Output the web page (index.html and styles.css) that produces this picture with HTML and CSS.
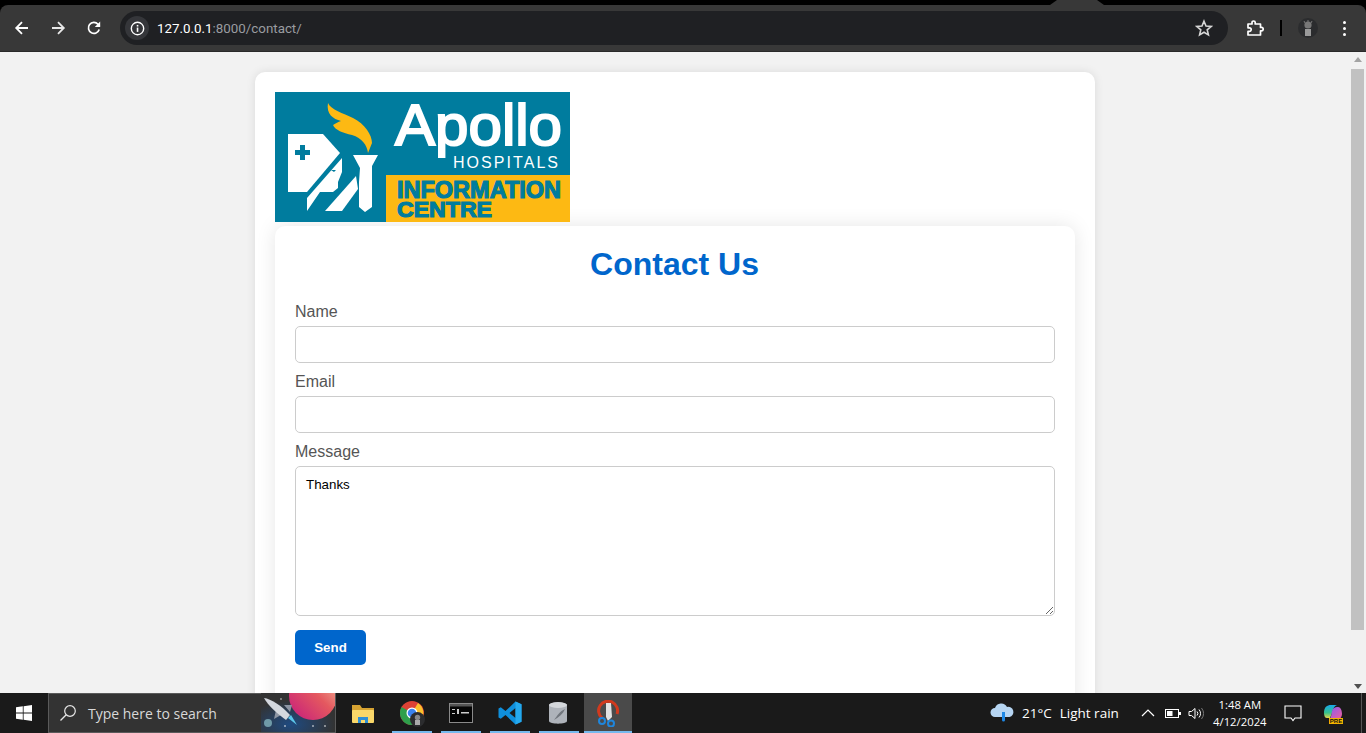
FILE: index.html
```html
<!DOCTYPE html>
<html lang="en">
<head>
    <meta charset="UTF-8">
    <meta name="viewport" content="width=device-width, initial-scale=1.0">
    <title>Contact Us</title>
    <link rel="stylesheet" href="styles.css">
</head>
<body>
    <!-- Browser toolbar -->
    <header class="browser-bar">
        <div class="tab-strip"><span class="tab-gap"></span></div>
        <div class="toolbar">
            <button class="tool-btn" type="button" aria-label="Back">
                <svg width="16" height="16" viewBox="0 0 16 16"><path d="M14 8H2.5M8 2.2 2.2 8 8 13.8" fill="none" stroke="#fff" stroke-width="1.8"/></svg>
            </button>
            <button class="tool-btn" type="button" aria-label="Forward">
                <svg width="16" height="16" viewBox="0 0 16 16"><path d="M2 8h11.5M8 2.2 13.8 8 8 13.8" fill="none" stroke="#e8e8e8" stroke-width="1.8"/></svg>
            </button>
            <button class="tool-btn" type="button" aria-label="Reload">
                <svg width="16" height="16" viewBox="0 0 16 16"><path d="M13.2 9.5A5.5 5.5 0 1 1 12 4.2L13.6 5.8" fill="none" stroke="#fff" stroke-width="1.7"/><path d="M14.2 1.6V7H8.8Z" fill="#fff"/></svg>
            </button>
            <div class="address-bar">
                <span class="site-info">
                    <svg width="15" height="15" viewBox="0 0 16 16"><circle cx="8" cy="8" r="6.6" fill="none" stroke="#fff" stroke-width="1.5"/><rect x="7.2" y="7" width="1.7" height="4.6" fill="#fff"/><rect x="7.2" y="4.2" width="1.7" height="1.7" fill="#fff"/></svg>
                </span>
                <span class="url"><span class="url-host">127.0.0.1</span>:8000/contact/</span>
                <svg class="star" width="18" height="18" viewBox="0 0 18 18"><path d="M9 2.2 11 7l5.2.4-4 3.4 1.2 5.1L9 13.2l-4.4 2.7 1.2-5.1-4-3.4L7 7Z" fill="none" stroke="#d6d6d6" stroke-width="1.6"/></svg>
            </div>
            <button class="tool-btn ext-btn" type="button" aria-label="Extensions">
                <svg width="18" height="18" viewBox="0 0 18 18"><path d="M2 5h4V3.6a1.6 1.6 0 0 1 3.2 0V5h5.3v3.4h1a1.7 1.7 0 0 1 0 3.4h-1V16H2v-3.6h1.4a1.7 1.7 0 0 0 0-3.6H2Z" fill="none" stroke="#fff" stroke-width="1.7" stroke-linejoin="round"/></svg>
            </button>
            <span class="bar-divider"></span>
            <span class="avatar">
                <svg width="20" height="20" viewBox="0 0 20 20"><circle cx="10" cy="10" r="10" fill="#2b2c2e"/><circle cx="10" cy="7" r="3.6" fill="#777"/><path d="M7 5 6 3M10 4V2M13 5l1-2" stroke="#777"/><rect x="7" y="11" width="6" height="7" fill="#999"/></svg>
            </span>
            <button class="tool-btn menu-btn" type="button" aria-label="Menu">
                <span class="menu-dot"></span><span class="menu-dot"></span><span class="menu-dot"></span>
            </button>
        </div>
    </header>

    <div class="viewport">
        <main class="page">
            <div class="wrapper">
                <svg class="logo" width="295" height="130" viewBox="0 0 295 130" role="img" aria-label="Apollo Hospitals Information Centre">
                    <rect width="295" height="130" fill="#007c9e"/>
                    <rect x="111" y="83" width="184" height="47" fill="#fdb913"/>
                    <!-- flame -->
                    <path d="M53 11C56 18 68 21 78 26 90 32 97 43 97 51L93 61C92 53 87 46 77 43 68 41 60 38 58 33 61 31 63 30 66 29 58 27 51 22 53 11Z" fill="#fdb913"/>
                    <!-- shield and cross -->
                    <path d="M13 42H48L65 61 32 100H13Z" fill="#fff"/>
                    <path d="M25 53h5v5h5v5h-5v5h-5v-5h-5v-5h5Z" fill="#007c9e"/>
                    <!-- head -->
                    <path d="M32 106 67 66V80L63 90V96L58 100H45L32 119Z" fill="#fff"/>
                    <path d="M56 78h5l-2 2Z" fill="#007c9e"/>
                    <!-- torch -->
                    <path d="M78 63H103L97 74V115L90 120 84 115V90L85 76Z" fill="#fff"/>
                    <path d="M50 119 81 84 83 97 67 119Z" fill="#fff"/>
                    <text x="120" y="53" class="logo-apollo" textLength="167" lengthAdjust="spacingAndGlyphs">Apollo</text>
                    <text x="178" y="76" class="logo-hospitals" textLength="105" lengthAdjust="spacing">HOSPITALS</text>
                    <text x="122" y="106" class="logo-info" textLength="164" lengthAdjust="spacingAndGlyphs">INFORMATION</text>
                    <text x="122" y="125" class="logo-centre" textLength="95" lengthAdjust="spacingAndGlyphs">CENTRE</text>
                </svg>
                <div class="contact-card">
                    <h1>Contact Us</h1>
                    <form>
                        <label for="name">Name</label>
                        <input type="text" id="name" name="name">
                        <label for="email">Email</label>
                        <input type="email" id="email" name="email">
                        <label for="message">Message</label>
                        <textarea id="message" name="message">Thanks</textarea>
                        <button class="send-btn" type="submit">Send</button>
                    </form>
                </div>
            </div>
        </main>
        <!-- Scrollbar -->
        <div class="scrollbar">
            <span class="arrow-up"></span>
            <span class="thumb"></span>
            <span class="arrow-down"></span>
        </div>
    </div>

    <!-- Windows taskbar -->
    <footer class="taskbar">
        <div class="start">
            <svg width="16" height="16" viewBox="0 0 16 16"><path d="M0 2.300 6.800 1.300V7.600H0ZM7.600 1.200 16 0V7.600H7.600ZM0 8.400H6.800V14.700L0 13.700ZM7.600 8.400H16V16L7.600 14.800Z" fill="#fff"/></svg>
        </div>
        <div class="search-box">
            <svg class="search-icon" width="18" height="18" viewBox="0 0 18 18"><circle cx="11" cy="7" r="5.300" fill="none" stroke="#e6e6e6" stroke-width="1.200"/><path d="M7.200 10.800 1.500 16.500" stroke="#e6e6e6" stroke-width="1.300"/></svg>
            <span class="search-text">Type here to search</span>
            <svg class="search-art" width="74" height="39" viewBox="0 0 74 39">
                <defs>
                    <linearGradient id="planet" x1="0" y1="1" x2="1" y2="0">
                        <stop offset="0" stop-color="#c4197f"/>
                        <stop offset=".55" stop-color="#e4585f"/>
                        <stop offset="1" stop-color="#f2c5a0"/>
                    </linearGradient>
                    <radialGradient id="glow" cx=".4" cy=".8" r=".6">
                        <stop offset="0" stop-color="#1f4a80"/>
                        <stop offset="1" stop-color="#333"/>
                    </radialGradient>
                </defs>
                <rect width="74" height="39" fill="url(#glow)"/>
                <circle cx="52" cy="3" r="24" fill="url(#planet)"/>
                <circle cx="7" cy="30" r="4" fill="#6f9aa8"/>
                <path d="M15 17 13 26 20 22ZM23 12 31 12 29 19Z" fill="#8d95a3"/>
                <path d="M3 5C10 6 20 12 29 22L25 27C15 20 7 12 3 5Z" fill="#d4d8de"/>
                <path d="M27 25 36 32 30 22Z" fill="#5cc6ea"/>
                <g fill="#fff"><circle cx="20" cy="6" r=".7"/><circle cx="24" cy="33" r=".8"/><circle cx="52" cy="33" r=".8"/><circle cx="64" cy="33" r=".8"/></g>
            </svg>
        </div>
        <div class="task-apps">
            <span class="task-app">
                <svg width="24" height="22" viewBox="0 0 24 22"><path d="M1 3h8l2 3h12v4H1Z" fill="#d6a332"/><rect x="1" y="8" width="22" height="13" rx="1" fill="#f9d769"/><path d="M7 21v-6h10v6h-3v-3h-4v3Z" fill="#2d8fd6"/></svg>
            </span>
            <span class="task-app open">
                <svg width="24" height="24" viewBox="0 0 24 24"><circle cx="12" cy="12" r="12" fill="#dd4235"/><path d="M12 12 1.600 6A12 12 0 0 0 12 24l6-10Z" fill="#2e9f4b"/><path d="M12 12 18 2A12 12 0 0 1 12 24l6-10.400Z" fill="#fbc02d"/><circle cx="12" cy="12" r="5.500" fill="#fff"/><circle cx="12" cy="12" r="4.300" fill="#3a82ee"/></svg>
                <span class="chrome-badge">
                    <svg width="15" height="15" viewBox="0 0 15 15"><circle cx="7.500" cy="7.500" r="7.500" fill="#2b2c2e"/><circle cx="7.500" cy="5.500" r="2.700" fill="#888"/><rect x="5" y="8" width="5" height="5" fill="#aaa"/></svg>
                </span>
            </span>
            <span class="task-app open">
                <svg width="24" height="20" viewBox="0 0 24 20"><rect x=".5" y=".5" width="23" height="19" fill="#050505" stroke="#8a8a8a"/><rect x="1" y="1" width="22" height="2.500" fill="#555"/><path d="M3 6h3v1H3v3h3v1H3ZM8 6h2v5H8ZM12 9h8v1.500h-8Z" fill="#ccc"/></svg>
            </span>
            <span class="task-app open">
                <svg width="24" height="24" viewBox="0 0 24 24"><path d="M17.500 0.500 23.500 3.300V20.700L17.500 23.500 7.500 14 2.800 17.700.5 16.400V7.600L2.800 6.300 7.500 10ZM17.500 7 11.500 12 17.500 17Z" fill="#0f8fdc"/><path d="M17.500.5 23.500 3.300V20.700L17.500 23.500Z" fill="#25a9ee"/></svg>
            </span>
            <span class="task-app open">
                <svg class="db-icon" width="20" height="24" viewBox="0 0 20 24"><path d="M1 4C1 .5 19 .5 19 4V20C19 23.500 1 23.500 1 20Z" fill="#aeb3ba"/><ellipse cx="10" cy="4" rx="9" ry="3" fill="#d4d7db"/><path d="M6 19C9 15 12 10 17 8 15 13 11 16 6 19Z" fill="#71767d"/></svg>
            </span>
            <span class="task-app open active">
                <svg width="24" height="27" viewBox="0 0 24 27"><path d="M6 18A9.500 9.500 0 1 1 21 14" fill="none" stroke="#d13a1e" stroke-width="3"/><path d="M10 3H15L16 17 12 21 10 17Z" fill="#e2e2e2"/><circle cx="6" cy="21" r="3" fill="none" stroke="#1f86dc" stroke-width="2"/><circle cx="15" cy="23.500" r="3" fill="none" stroke="#1f86dc" stroke-width="2"/></svg>
            </span>
        </div>
        <div class="tray">
            <svg class="weather-icon" width="26" height="22" viewBox="0 0 26 22"><path d="M6 15A4.500 4.500 0 0 1 6 6 6.500 6.500 0 0 1 18 5 5 5 0 0 1 20.500 15Z" fill="#b6d5f2"/><path d="M13 10h3v8a1.500 1.500 0 0 1-3 0Z" fill="#1e88e5"/></svg>
            <span class="temp">21°C</span>
            <span class="weather-text">Light rain</span>
            <svg class="tray-chevron" width="14" height="8" viewBox="0 0 14 8"><path d="M1 7 7 1l6 6" fill="none" stroke="#fff" stroke-width="1.200"/></svg>
            <svg class="tray-battery" width="16" height="9" viewBox="0 0 16 9"><rect x=".5" y=".5" width="13" height="8" fill="none" stroke="#fff"/><rect x="2" y="2" width="5.500" height="5" fill="#fff"/><rect x="14" y="3" width="2" height="3" fill="#fff"/></svg>
            <svg class="tray-volume" width="16" height="13" viewBox="0 0 16 13"><path d="M1 4.500H3.500L7 1.500V11.500L3.500 8.500H1Z" fill="none" stroke="#fff"/><path d="M9 4.500a3 3 0 0 1 0 4M11 2.500a6 6 0 0 1 0 8" fill="none" stroke="#fff"/><path d="M13.500 1a9 9 0 0 1 0 11" fill="none" stroke="#777"/></svg>
            <div class="clock"><span>1:48 AM</span><span>4/12/2024</span></div>
            <svg class="tray-notify" width="18" height="17" viewBox="0 0 18 17"><path d="M1 1H17V13H11L9 15.500 7 13H1Z" fill="none" stroke="#fff" stroke-width="1.100"/></svg>
            <span class="copilot">
                <svg class="copilot-icon" width="20" height="16" viewBox="0 0 20 16">
                    <defs>
                        <linearGradient id="copilot-left" x1="0" y1="0" x2="0" y2="1">
                            <stop offset="0" stop-color="#18a8ea"/>
                            <stop offset=".6" stop-color="#36c28c"/>
                            <stop offset="1" stop-color="#e6d84a"/>
                        </linearGradient>
                        <linearGradient id="copilot-right" x1="0" y1="0" x2="1" y2="1">
                            <stop offset="0" stop-color="#8a5cf0"/>
                            <stop offset="1" stop-color="#ee5f9e"/>
                        </linearGradient>
                    </defs>
                    <path d="M1 9C1 3 4 1 8 1H14C11 2 10 5 9 9L7 14H4C2 14 1 12 1 9Z" fill="url(#copilot-left)"/>
                    <path d="M9 7C10 4 12 3 14 3H15C18 3 19 7 19 10 19 13 17 15 15 15H7C8 13 8.500 10 9 7Z" fill="url(#copilot-right)"/>
                </svg>
                <span class="pre-badge">PRE</span>
            </span>
            <span class="show-desktop"></span>
        </div>
    </footer>
</body>
</html>
```

FILE: styles.css
```css
* {
    box-sizing: border-box;
}
html, body {
    height: 100%;
}
body {
    margin: 0;
    display: flex;
    flex-direction: column;
    overflow: hidden;
    font-family: "Liberation Sans", Arial, sans-serif;
    background-color: #f2f2f2;
}

/* browser toolbar */
.browser-bar {
    height: 52px;
    flex: none;
    background-color: #000;
}
.tab-strip {
    height: 5px;
    display: flex;
    padding-left: 1050px;
}
.tab-gap {
    width: 54px;
    background-color: #383838;
    clip-path: polygon(0 100%, 7px 0, 47px 0, 100% 100%);
}
.toolbar {
    height: 47px;
    display: flex;
    align-items: center;
    padding-left: 4px;
    background-color: #383838;
    border-radius: 8px 8px 0 0;
    border-bottom: 1px solid #2a2a2a;
}
.tool-btn {
    width: 36px;
    height: 34px;
    display: flex;
    align-items: center;
    justify-content: center;
    padding: 0;
    border: 0;
    background: none;
}
.address-bar {
    width: 1108px;
    height: 34px;
    margin-left: 8px;
    display: flex;
    align-items: center;
    padding: 0 15px 0 5px;
    background-color: #1f2023;
    border-radius: 17px;
}
.site-info {
    width: 24px;
    height: 24px;
    display: flex;
    align-items: center;
    justify-content: center;
    background-color: #35363a;
    border-radius: 50%;
}
.url {
    margin-left: 8px;
    flex: 1;
    font: 13.35px Roboto, sans-serif;
    color: #9a9ca0;
}
.url-host {
    color: #fff;
}
.ext-btn {
    margin-left: 9px;
}
.bar-divider {
    width: 2px;
    height: 16px;
    margin-left: 7px;
    background-color: #000;
}
.avatar {
    width: 20px;
    height: 20px;
    margin-left: 16px;
}
.menu-btn {
    width: 16px;
    margin-left: 18px;
    flex-direction: column;
    gap: 3px;
}
.menu-dot {
    width: 3px;
    height: 3px;
    background-color: #fff;
    border-radius: 50%;
}

/* page area */
.viewport {
    flex: 1;
    min-height: 0;
    display: flex;
}
.page {
    flex: 1;
    min-width: 0;
    overflow: hidden;
    display: flex;
    justify-content: center;
    padding-top: 20px;
}
.wrapper {
    width: 840px;
    padding: 20px 20px 0;
    background-color: #fff;
    border-radius: 10px;
    box-shadow: 0 0 10px rgba(0, 0, 0, 0.1);
    height: 700px;
}
.logo {
    display: block;
}
.logo-apollo {
    font: 58px "Liberation Sans", sans-serif;
    fill: #fff;
    stroke: #fff;
    stroke-width: 2px;
}
.logo-hospitals {
    font: 16px "Liberation Sans", sans-serif;
    fill: #fff;
}
.logo-info {
    font: bold 24px "Liberation Sans", sans-serif;
    fill: #007c9e;
    stroke: #007c9e;
    stroke-width: 1.2px;
}
.logo-centre {
    font: bold 22px "Liberation Sans", sans-serif;
    fill: #007c9e;
    stroke: #007c9e;
    stroke-width: 1.2px;
}
.contact-card {
    margin-top: 4px;
    padding: 20px;
    height: 600px;
    background-color: #fff;
    border-radius: 10px;
    box-shadow: 0 0 20px rgba(0, 0, 0, 0.1);
}
h1 {
    margin: 0 0 20px;
    padding-right: 1px;
    text-align: center;
    font-size: 32px;
    line-height: 37px;
    color: #0066cc;
}
label {
    display: block;
    font-size: 16px;
    line-height: 18px;
    margin-bottom: 5px;
    color: #555;
}
input,
textarea {
    display: block;
    width: 100%;
    border: 1px solid #ccc;
    border-radius: 5px;
    background-color: #fff;
}
input {
    height: 37px;
    margin-bottom: 10px;
}
textarea {
    height: 150px;
    padding: 10px;
    margin-bottom: 14px;
    font: 13.33px "Liberation Sans", sans-serif;
    color: #000;
}
.send-btn {
    width: 71px;
    height: 35px;
    border: 0;
    border-radius: 5px;
    background-color: #0066cc;
    color: #fff;
    font: bold 13.33px "Liberation Sans", sans-serif;
}

/* scrollbar */
.scrollbar {
    width: 16px;
    flex: none;
    display: flex;
    flex-direction: column;
    align-items: center;
    padding: 5px 0 4px;
    background-color: #f1f1f1;
}
.arrow-up,
.arrow-down {
    width: 0;
    height: 0;
    border-left: 4px solid transparent;
    border-right: 4px solid transparent;
}
.arrow-up {
    border-bottom: 5px solid #a3a3a3;
}
.arrow-down {
    margin-top: auto;
    border-top: 5px solid #505050;
}
.thumb {
    width: 13px;
    height: 561px;
    margin-top: 7px;
    margin-right: 2px;
    background-color: #c1c1c1;
}

/* taskbar */
.taskbar {
    height: 40px;
    flex: none;
    display: flex;
    background-color: #1a1a1a;
    color: #fff;
    font-family: "Open Sans", sans-serif;
}
.start {
    width: 48px;
    display: flex;
    align-items: center;
    justify-content: center;
}
.search-box {
    width: 288px;
    display: flex;
    align-items: center;
    padding-left: 10px;
    background-color: #333;
    border: 1px solid #5a5a5a;
}
.search-text {
    margin-left: 11px;
    flex: 1;
    font-size: 14px;
    color: #d8d8d8;
}
.search-art {
    align-self: flex-end;
}
.task-apps {
    display: flex;
    margin-left: 3px;
}
.task-app {
    width: 49px;
    display: flex;
    align-items: center;
    justify-content: center;
    position: relative;
}
.task-app > svg {
    margin-right: 2px;
}
.task-app > .db-icon {
    margin-right: 4px;
}
.task-app.open::after {
    content: "";
    position: absolute;
    left: 4px;
    right: 5px;
    bottom: 0;
    height: 2px;
    background-color: #76b9ed;
}
.task-app.active {
    width: 48px;
    background-color: #4a4a4a;
}
.task-app.active > svg {
    margin-right: 0;
}
.task-app.active::after {
    left: 0;
    right: 0;
}
.chrome-badge {
    position: absolute;
    left: 22px;
    top: 19px;
    display: flex;
}
.tray {
    flex: 1;
    display: flex;
    align-items: center;
    padding-left: 357px;
    font-size: 13.5px;
}
.temp {
    margin-left: 7px;
}
.weather-text {
    margin-left: 8px;
}
.tray-chevron {
    margin-left: 22px;
}
.tray-battery {
    margin-left: 10px;
}
.tray-volume {
    margin-left: 7px;
}
.clock {
    width: 60px;
    margin-left: 6px;
    display: flex;
    flex-direction: column;
    align-items: center;
    font-size: 11.3px;
    line-height: 17px;
}
.tray-notify {
    margin-left: 14px;
}
.copilot {
    position: relative;
    margin-left: 20px;
    width: 22px;
    height: 22px;
}
.copilot-icon {
    display: block;
    margin: 2px 0 0 1px;
}
.pre-badge {
    position: absolute;
    left: 7px;
    top: 16px;
    padding: 0 1px;
    font: bold 6px/6px "Liberation Sans", sans-serif;
    color: #111;
    background-color: #f5b400;
}
.show-desktop {
    width: 1px;
    height: 40px;
    margin-left: auto;
    margin-right: 4px;
    background-color: #555;
}
```
